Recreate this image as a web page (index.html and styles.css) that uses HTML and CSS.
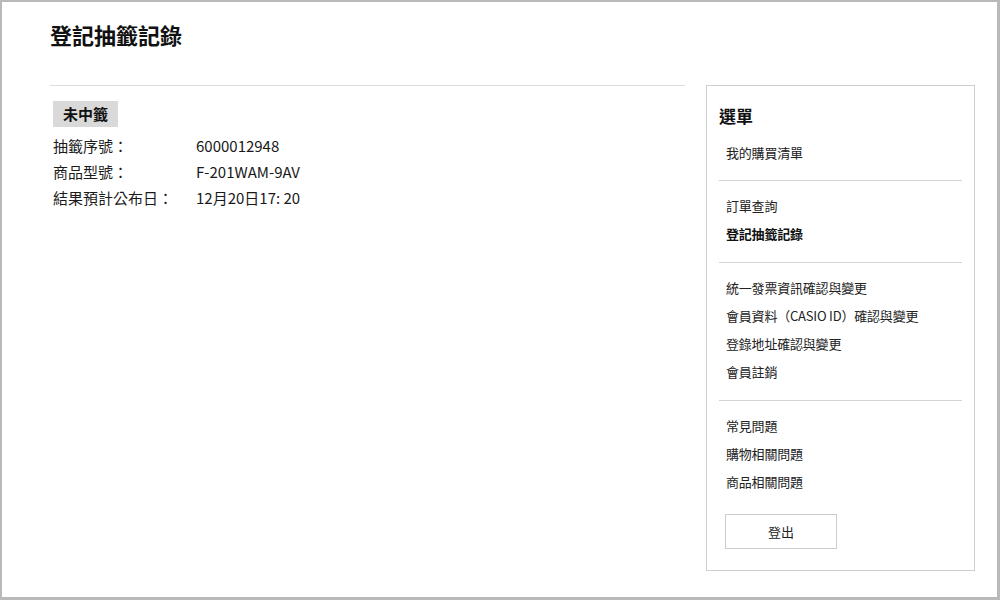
FILE: index.html
```html
<!DOCTYPE html>
<html lang="zh-Hant">
<head>
    <meta charset="UTF-8">
    <title>登記抽籤記錄</title>
    <link rel="stylesheet" href="styles.css">
</head>
<body>

<div class="frame">
    <div class="page-header">
        <h1 class="page-title">登記抽籤記錄</h1>
    </div>

    <div class="page-body">
        <div class="main">
            <span class="status-badge">未中籤</span>
            <div class="detail-list">
                <div class="detail-label">抽籤序號：</div>
                <div class="detail-value">6000012948</div>
                <div class="detail-label">商品型號：</div>
                <div class="detail-value">F-201WAM-9AV</div>
                <div class="detail-label">結果預計公布日：</div>
                <div class="detail-value">12月20日17: 20</div>
            </div>
        </div>

        <div class="menu-sidebar">
            <h2 class="menu-title">選單</h2>
            <ul class="menu-group first">
                <li><a href="#">我的購買清單</a></li>
            </ul>
            <ul class="menu-group">
                <li><a href="#">訂單查詢</a></li>
                <li><a href="#" class="current">登記抽籤記錄</a></li>
            </ul>
            <ul class="menu-group">
                <li><a href="#">統一發票資訊確認與變更</a></li>
                <li><a href="#">會員資料（CASIO ID）確認與變更</a></li>
                <li><a href="#">登錄地址確認與變更</a></li>
                <li><a href="#">會員註銷</a></li>
            </ul>
            <ul class="menu-group last">
                <li><a href="#">常見問題</a></li>
                <li><a href="#">購物相關問題</a></li>
                <li><a href="#">商品相關問題</a></li>
            </ul>
            <button class="logout-button">登出</button>
        </div>
    </div>
</div>

</body>
</html>
```

FILE: styles.css
```css
* {
    box-sizing: border-box;
}

body {
    margin: 0;
    font-family: "Noto Sans CJK TC", "Noto Sans", sans-serif;
    color: #222;
    background: #fff;
}

/* Grey frame round the whole page */
.frame {
    width: 1000px;
    height: 600px;
    border: 2px solid #b9b9b9;
    border-right-width: 3px;
    border-bottom-width: 3px;
    padding: 0 22px 0 48px;
}

.page-header {
    height: 83px;
    padding-top: 17px;
}

.page-title {
    margin: 0;
    font-size: 22px;
    line-height: 30px;
    font-weight: bold;
    color: #111;
}

.page-body {
    display: flex;
    gap: 21px;
    align-items: flex-start;
}

/* Left column */
.main {
    flex: 1;
    border-top: 1px solid #dcdcdc;
    padding: 15px 3px 0;
}

.status-badge {
    display: inline-block;
    background-color: #d9d9d9;
    font-size: 15px;
    font-weight: bold;
    line-height: 26px;
    padding: 0 10px;
    color: #111;
}

.detail-list {
    display: grid;
    grid-template-columns: 143px 1fr;
    margin-top: 6px;
    font-size: 15px;
    line-height: 26px;
    color: #1a1a1a;
}

/* The sidebar menu */
.menu-sidebar {
    width: 269px;
    border: 1px solid #cfcfcf;
    padding: 18px 12px 21px;
}

.menu-title {
    margin: 0 0 11px;
    font-size: 17px;
    line-height: 24px;
    font-weight: bold;
    color: #111;
}

.menu-group {
    list-style: none;
    margin: 0;
    padding: 11px 0 14px;
    border-bottom: 1px solid #d4d4d4;
}

.menu-group.first {
    padding-top: 0;
    padding-bottom: 13px;
}

.menu-group.last {
    border-bottom: none;
    padding-bottom: 0;
}

.menu-group li a {
    display: block;
    padding-left: 7px;
    font-size: 13px;
    line-height: 28px;
    letter-spacing: -0.2px;
    color: #222;
    text-decoration: none;
}

.menu-group li a.current {
    font-weight: bold;
    color: #111;
}

.logout-button {
    display: block;
    width: 112px;
    height: 35px;
    margin: 18px 0 0 6px;
    background: #fff;
    border: 1px solid #cccccc;
    font-family: inherit;
    font-size: 13px;
    color: #222;
}
```
